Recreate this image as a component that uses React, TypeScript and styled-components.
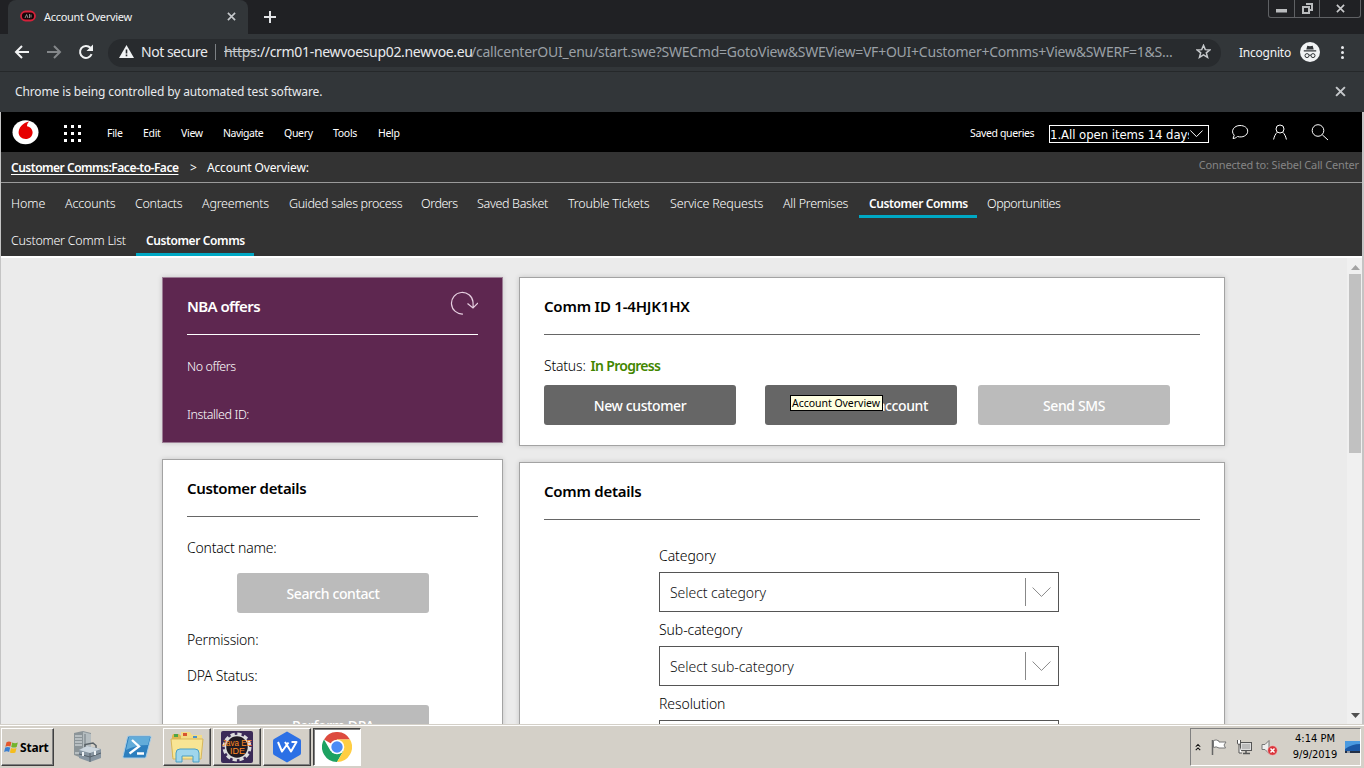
import React from "react";
import styled, { createGlobalStyle, css } from "styled-components";

const GlobalStyle = createGlobalStyle`
  * { box-sizing: border-box; }
  body { margin: 0; overflow: hidden; font-family: "Noto Sans", "Open Sans", sans-serif; }
  h2, p { margin: 0; }
  button { font-family: inherit; }
`;

const Desktop = styled.div`
  width: 1364px;
  height: 768px;
  display: flex;
  flex-direction: column;
  overflow: hidden;
`;

/* Browser chrome */
const TabStrip = styled.div`
  height: 34px;
  flex: none;
  display: flex;
  align-items: flex-end;
  background: #202124;
  padding-left: 8px;
`;
const Tab = styled.div`
  width: 240px;
  height: 34px;
  display: flex;
  align-items: center;
  background: #323639;
  border-radius: 8px 8px 0 0;
  padding: 0 12px 2px 12px;
`;
const TabTitle = styled.span`
  flex: 1;
  margin-left: 8px;
  font-size: 11px;
  letter-spacing: -0.3px;
  color: #f1f3f4;
`;
const NewTab = styled.div`
  height: 34px;
  display: flex;
  align-items: center;
  margin-left: 16px;
  flex: 1;
`;
const WindowControls = styled.div`
  align-self: flex-start;
  display: flex;
  width: 93px;
  height: 18px;
  margin-right: 3px;
  border: 1px solid #5f6164;
  border-top: 0;
  border-radius: 0 0 3px 3px;
`;
const WindowButton = styled.div<{ $width: number }>`
  width: ${(p) => p.$width}px;
  display: flex;
  align-items: center;
  justify-content: center;
  padding-bottom: 1px;
  & + & { border-left: 1px solid #5f6164; }
`;
const Toolbar = styled.div`
  height: 38px;
  flex: none;
  display: flex;
  align-items: center;
  background: #323639;
  border-bottom: 1px solid #25282a;
  padding-left: 14px;
`;
const NavIcons = styled.div`
  display: flex;
  gap: 16px;
  width: 94px;
  padding-bottom: 1px;
`;
const Omnibox = styled.div`
  width: 1113px;
  height: 28px;
  border-radius: 14px;
  background: #282b2e;
  display: flex;
  align-items: center;
  padding: 0 10px 2px 11px;
  font-size: 14px;
  white-space: nowrap;
  color: #e8eaed;
`;
const Security = styled.span`
  width: 68px;
  margin-left: 7px;
  letter-spacing: -0.48px;
`;
const Separator = styled.i`
  width: 1px;
  height: 16px;
  margin: 0 8px 0 6px;
  background: #7c8084;
`;
const UrlHost = styled.span`
  width: 247px;
  letter-spacing: -0.32px;
`;
const Struck = styled.s`color: #c3c7cb;`;
const UrlPath = styled.span`
  flex: 1;
  letter-spacing: -0.24px;
  color: #9aa0a6;
`;
const Incognito = styled.div`
  display: flex;
  align-items: center;
  gap: 9px;
  margin-left: 18px;
  padding-bottom: 1px;
  font-size: 12px;
  letter-spacing: -0.22px;
  color: #f1f3f4;
`;
const Dots = styled.div`
  width: 3px;
  height: 13px;
  margin-left: 21px;
  display: flex;
  flex-direction: column;
  justify-content: space-between;
  i { width: 3px; height: 3px; border-radius: 50%; background: #e8eaed; }
`;
const InfoBar = styled.div`
  height: 40px;
  flex: none;
  display: flex;
  align-items: center;
  justify-content: space-between;
  padding: 0 18px 1px 15px;
  background: #323639;
  color: #e8eaed;
  font-size: 12px;
  letter-spacing: -0.12px;
`;

/* Application header */
const Page = styled.div`
  flex: 1;
  min-height: 0;
  display: flex;
  flex-direction: column;
  overflow: hidden;
  background: #ebebeb;
  border-left: 1px solid #c4c4c4;
  border-right: 2px solid #c4c4c4;
`;
const AppBar = styled.header`
  height: 40px;
  flex: none;
  display: flex;
  align-items: center;
  background: #000;
  color: #fff;
  padding: 0 33px 0 11px;
  font-size: 10.5px;
`;
const AppGrid = styled.div`
  display: grid;
  grid-template-columns: repeat(3, 3px);
  gap: 4px;
  margin: 2px 26px 0 25px;
  i { width: 3px; height: 3px; background: #fff; }
`;
const Menu = styled.nav`
  display: flex;
  flex: 1;
  padding-top: 1px;
`;
const MenuItem = styled.span<{ $width: number; $track?: number }>`
  width: ${(p) => p.$width}px;
  letter-spacing: ${(p) => p.$track ?? -0.3}px;
`;
const QueryLabel = styled.span`
  width: 79px;
  padding-top: 1px;
  letter-spacing: -0.36px;
`;
const QuerySelect = styled.div`
  width: 160px;
  height: 18px;
  margin: 3px 22px 0 0;
  border: 1px solid #fff;
  display: flex;
  align-items: center;
  font: 13px "DejaVu Sans Condensed", sans-serif;
  svg { margin-left: 1px; }
`;
const QueryText = styled.span`
  width: 139px;
  padding-top: 1px;
  white-space: nowrap;
  letter-spacing: -0.05px;
  overflow: hidden;
`;
const AppIcons = styled.div`
  display: flex;
  align-items: center;
  gap: 20px;
`;
const Crumbs = styled.div`
  height: 31px;
  flex: none;
  display: flex;
  align-items: center;
  background: #333;
  border-bottom: 1px solid #9a9a9a;
  padding: 0 3px 0 10px;
  color: #fff;
  font-size: 12px;
`;
const CrumbLink = styled.a`
  width: 179px;
  font-weight: 600;
  letter-spacing: -0.49px;
  text-decoration: underline;
  text-underline-offset: 2px;
`;
const CrumbCurrent = styled.span`
  flex: 1;
  margin-left: 10px;
  letter-spacing: -0.14px;
`;
const Connected = styled.span`
  align-self: flex-start;
  padding-top: 5px;
  font-size: 11px;
  letter-spacing: -0.15px;
  color: #858585;
`;
const Tabs = styled.nav<{ $height: number }>`
  height: ${(p) => p.$height}px;
  flex: none;
  display: flex;
  align-items: flex-end;
  background: #333;
`;
const TabLink = styled.a<{ $width: number; $track: number; $active?: boolean; $drop?: number }>`
  width: ${(p) => p.$width + 20}px;
  height: 28px;
  padding: ${(p) => 3 + (p.$drop ?? 2)}px 0 0 10px;
  line-height: 17px;
  font-size: 12.5px;
  font-weight: 300;
  white-space: nowrap;
  color: #fff;
  letter-spacing: ${(p) => p.$track}px;
  ${(p) => p.$active && css`
    width: ${p.$width + 19}px;
    font-size: 12px;
    font-weight: 600;
    border-bottom: 3px solid #00a8c4;
  `}
`;

/* Content */
const Body = styled.main`
  flex: 1;
  min-height: 0;
  display: flex;
  border-top: 2px solid #fff;
  overflow: hidden;
`;
const Columns = styled.div`
  flex: 1;
  display: grid;
  grid-template-columns: 341px 706px;
  gap: 16px;
  align-items: start;
  padding: 19px 0 0 161px;
`;
const Column = styled.div`
  display: flex;
  flex-direction: column;
  gap: 16px;
`;
const Card = styled.section<{ $height: number; $purple?: boolean }>`
  height: ${(p) => p.$height}px;
  padding: 0 24px;
  background: ${(p) => (p.$purple ? "#5e2750" : "#fff")};
  color: ${(p) => (p.$purple ? "#fff" : "#000")};
  border: 1px solid ${(p) => (p.$purple ? "#9c7d95" : "#a3a3a3")};
  box-shadow: 0 0 5px rgba(0, 0, 0, 0.16);
`;
const CardHead = styled.div<{ $light?: boolean }>`
  height: 57px;
  display: flex;
  justify-content: space-between;
  border-bottom: 1px solid ${(p) => (p.$light ? "#fff" : "#666")};
`;
const CardTitle = styled.h2<{ $track: number }>`
  padding-top: 17px;
  line-height: 22px;
  font-size: 15px;
  font-weight: 600;
  letter-spacing: ${(p) => p.$track}px;
`;
const OfferLine = styled.p<{ $top: number }>`
  margin-top: ${(p) => p.$top}px;
  font-size: 12.5px;
  font-weight: 300;
  line-height: 18px;
  letter-spacing: -0.42px;
`;
const Field = styled.p<{ $top: number }>`
  margin-top: ${(p) => p.$top}px;
  height: 20px;
  line-height: 20px;
  font-size: 14px;
  font-weight: 300;
  letter-spacing: -0.2px;
`;
const Status = styled.b`
  margin-left: 5px;
  font-weight: 600;
  letter-spacing: -0.7px;
  color: #428600;
`;
const ButtonRow = styled.div`
  display: flex;
  margin-top: 9px;
`;
const Button = styled.button<{ $disabled?: boolean; $left?: number; $alignEnd?: boolean }>`
  position: relative;
  flex: none;
  width: 192px;
  height: 40px;
  margin-left: ${(p) => p.$left ?? 0}px;
  padding: 1px 0 0;
  border: 0;
  border-radius: 3px;
  background: ${(p) => (p.$disabled ? "#bbb" : "#666")};
  color: #fff;
  font-size: 14px;
  font-weight: 500;
  letter-spacing: -0.38px;
  ${(p) => p.$alignEnd && css`
    text-align: right;
    padding-right: 29px;
  `}
`;
const CustomerButton = styled(Button)<{ $top: number }>`
  display: block;
  margin: ${(p) => p.$top}px 0 0 50px;
`;
const Tooltip = styled.span`
  position: absolute;
  left: 25px;
  top: 10px;
  width: 93px;
  height: 16px;
  border: 1px solid #000;
  background: #ffffe1;
  color: #000;
  font-size: 10.5px;
  font-weight: 400;
  line-height: 14px;
  text-align: left;
  padding-left: 1px;
  letter-spacing: -0.03px;
`;
const Form = styled.div`
  width: 400px;
  margin: 26px 0 0 115px;
`;
const FormLabel = styled.label`
  display: block;
  height: 26px;
  line-height: 20px;
  font-size: 14px;
  font-weight: 300;
  letter-spacing: -0.08px;
`;
const SelectBox = styled.div`
  height: 40px;
  margin-bottom: 8px;
  border: 1px solid #555;
  display: flex;
  align-items: center;
  padding: 0 7px 0 10px;
  font-size: 14px;
  font-weight: 300;
  letter-spacing: -0.05px;
  color: #111;
  span { flex: 1; padding-top: 1px; }
  i { width: 1px; height: 28px; background: #888; margin-right: 6px; }
`;
const Scrollbar = styled.div`
  width: 15px;
  background: #f0f0f0;
  display: flex;
  flex-direction: column;
  align-items: center;
  padding: 7px 1px 6px 2px;
`;
const Thumb = styled.div`
  width: 12px;
  height: 179px;
  margin: 4px 0 auto;
  background: #c1c1c1;
`;

/* Taskbar */
const Taskbar = styled.footer`
  height: 44px;
  flex: none;
  display: flex;
  align-items: center;
  background: #d4d0c8;
  border-top: 1px solid #d4d0c8;
  box-shadow: inset 0 1px #fff;
  padding: 1px 1px 0;
`;
const bevel = css`
  border: 1px solid;
  border-color: #fff #404040 #404040 #fff;
  box-shadow: inset -1px -1px #808080;
`;
const StartButton = styled.div`
  ${bevel}
  width: 53px;
  height: 38px;
  display: flex;
  align-items: center;
  gap: 1px;
  padding-left: 2px;
  font-size: 12px;
  font-weight: 700;
  letter-spacing: -0.2px;
  color: #000;
`;
const Pinned = styled.div<{ $left: number }>`
  margin-left: ${(p) => p.$left}px;
  display: flex;
`;
const TaskButton = styled.div<{ $pressed?: boolean }>`
  ${bevel}
  width: 48px;
  height: 38px;
  margin-right: 2px;
  display: flex;
  align-items: center;
  justify-content: center;
  ${(p) => p.$pressed && css`
    background: #fff;
    border-color: #404040 #fff #fff #404040;
    box-shadow: inset 1px 1px #808080;
  `}
`;
const Tray = styled.div`
  width: 171px;
  height: 38px;
  margin: 0 2px 0 auto;
  display: flex;
  align-items: center;
  border: 1px solid;
  border-color: #808080 #fff #fff #808080;
  padding-left: 4px;
`;
const Clock = styled.div`
  width: 60px;
  text-align: center;
  font: 11px/16px "DejaVu Sans Condensed", sans-serif;
  color: #000;
`;

const Cross = ({ size, color }: { size: number; color: string }) => (
  <svg width={size} height={size} viewBox="0 0 10 10" stroke={color} strokeWidth="1.8" fill="none">
    <path d="M1 1L9 9M9 1L1 9" />
  </svg>
);
const Chevron = ({ width, color }: { width: number; color: string }) => (
  <svg width={width} height={width / 2 + 1} viewBox="0 0 18 10" stroke={color} strokeWidth={18 / width} fill="none">
    <path d="M.5 .5L9 9L17.5 .5" />
  </svg>
);
const Arrow = ({ color, flip }: { color: string; flip?: boolean }) => (
  <svg width="16" height="16" viewBox="0 0 16 16" fill="none" stroke={color} strokeWidth="2">
    {flip ? <path d="M1 8H14M8 2L14 8L8 14" /> : <path d="M15 8H2M8 2L2 8L8 14" />}
  </svg>
);

const mainTabs: [string, number, number][] = [
  ["Home", 34, -0.05], ["Accounts", 50, -0.18], ["Contacts", 47, -0.28], ["Agreements", 67, -0.22],
  ["Guided sales process", 112, -0.34], ["Orders", 36, -0.45], ["Saved Basket", 71, -0.32],
  ["Trouble Tickets", 82, -0.22], ["Service Requests", 93, -0.16], ["All Premises", 66, -0.26],
];

export default function App() {
  return (
    <Desktop>
      <GlobalStyle />
      <TabStrip>
        <Tab>
          <svg width="16" height="12" viewBox="0 0 16 12">
            <rect x="1" y="1.5" width="14" height="9" rx="4.5" fill="#160608" stroke="#d4213a" strokeWidth="1.8" />
            <path d="M5 8L6.6 4.5L8 8M9.5 4v4M11 4.5v3" stroke="#9b9b9b" strokeWidth=".9" fill="none" />
          </svg>
          <TabTitle>Account Overview</TabTitle>
          <Cross size={9} color="#c5c8cb" />
        </Tab>
        <NewTab>
          <svg width="12" height="12" viewBox="0 0 12 12" stroke="#e3e5e8" strokeWidth="2"><path d="M6 0V12M0 6H12" /></svg>
        </NewTab>
        <WindowControls>
          <WindowButton $width={25}>
            <svg width="11" height="10" viewBox="0 0 11 10"><rect y="6" width="11" height="3.500" fill="#babcbe" /></svg>
          </WindowButton>
          <WindowButton $width={25}>
            <svg width="11" height="11" viewBox="0 0 11 11" fill="none" stroke="#babcbe" strokeWidth="2"><path d="M4 1H10V7H8" /><path d="M1 4H7V10H1Z" /></svg>
          </WindowButton>
          <WindowButton $width={41}><Cross size={9} color="#c9cacc" /></WindowButton>
        </WindowControls>
      </TabStrip>
      <Toolbar>
        <NavIcons>
          <Arrow color="#f1f3f4" />
          <Arrow color="#84878a" flip />
          <svg width="16" height="16" viewBox="0 0 16 16" fill="none" stroke="#f1f3f4" strokeWidth="2">
            <path d="M13.6 10.2A6 6 0 1 1 12.4 3.8" /><path d="M15 .5V7H8.5Z" fill="#f1f3f4" stroke="none" />
          </svg>
        </NavIcons>
        <Omnibox>
          <svg width="15" height="13" viewBox="0 0 15 13"><path d="M7.5 0L15 13H0Z" fill="#f1f3f4" /><path d="M7.5 4.5V8.5M7.5 9.6V11.2" stroke="#282b2e" strokeWidth="1.6" /></svg>
          <Security>Not secure</Security>
          <Separator />
          <UrlHost><Struck>https</Struck>://crm01-newvoesup02.newvoe.eu</UrlHost>
          <UrlPath>/callcenterOUI_enu/start.swe?SWECmd=GotoView&amp;SWEView=VF+OUI+Customer+Comms+View&amp;SWERF=1&amp;S...</UrlPath>
          <svg width="15" height="15" viewBox="0 0 16 16" fill="none" stroke="#c6c9cc" strokeWidth="1.6">
            <path d="M8 1.5L9.9 6L14.8 6.3L11 9.4L12.3 14.2L8 11.6L3.7 14.2L5 9.4L1.2 6.3L6.1 6Z" />
          </svg>
        </Omnibox>
        <Incognito>
          Incognito
          <svg width="20" height="20" viewBox="0 0 20 20">
            <circle cx="10" cy="10" r="10" fill="#f1f3f4" />
            <path d="M6.3 7.5L7.3 3.7L10 4.3L12.7 3.7L13.7 7.5ZM3.8 8.3H16.2V9.5H3.8Z" fill="#323639" />
            <g fill="none" stroke="#323639"><circle cx="7" cy="13.6" r="2" /><circle cx="13" cy="13.6" r="2" /><path d="M9 13.2H11" /></g>
          </svg>
        </Incognito>
        <Dots><i /><i /><i /></Dots>
      </Toolbar>
      <InfoBar>
        Chrome is being controlled by automated test software.
        <Cross size={11} color="#c5c8cb" />
      </InfoBar>
      <Page>
        <AppBar>
          <svg width="27" height="25" viewBox="0 0 27 25">
            <ellipse cx="13.5" cy="12.3" rx="13" ry="12" fill="#fff" />
            <path d="M17.5 1.4C14.5 1.5 7 5 6.6 12C6.4 16 9.700 19 13.6 19C17.5 19 20.6 16 20.6 12.4C20.6 9 18 6.9 15 6.2C15 3.8 16 2.2 17.5 1.4Z" fill="#e60000" />
          </svg>
          <AppGrid>{Array.from({ length: 9 }, (_, i) => <i key={i} />)}</AppGrid>
          <Menu>
            <MenuItem $width={36}>File</MenuItem>
            <MenuItem $width={38}>Edit</MenuItem>
            <MenuItem $width={42}>View</MenuItem>
            <MenuItem $width={61} $track={-0.48}>Navigate</MenuItem>
            <MenuItem $width={49}>Query</MenuItem>
            <MenuItem $width={45}>Tools</MenuItem>
            <MenuItem $width={25}>Help</MenuItem>
          </Menu>
          <QueryLabel>Saved queries</QueryLabel>
          <QuerySelect><QueryText>1.All open items 14 days</QueryText><Chevron width={13} color="#fff" /></QuerySelect>
          <AppIcons>
            <svg width="18" height="17" viewBox="0 0 18 17" fill="none" stroke="#fff"><path d="M2 14.5L3.2 11.2C-.8 7 3 1.5 9 1.5C13.5 1.5 16.7 3.8 16.7 7.2C16.7 11.5 11.5 14 6.5 12.5C5 13.8 3.5 14.5 2 14.5Z" /></svg>
            <svg width="22" height="17" viewBox="0 0 22 17" fill="none" stroke="#fff"><circle cx="11" cy="5" r="4" /><path d="M8.3 8.2C6.5 10 5.3 12 4.6 15.5M13.7 8.2C15.5 10 16.7 12 17.4 15.5" /></svg>
            <svg width="18" height="17" viewBox="0 0 18 17" fill="none" stroke="#fff"><circle cx="7" cy="6.5" r="5.8" /><path d="M11.2 10.7L17 16" /></svg>
          </AppIcons>
        </AppBar>
        <Crumbs>
          <CrumbLink>Customer Comms:Face-to-Face</CrumbLink>
          <span>&gt;</span>
          <CrumbCurrent>Account Overview:</CrumbCurrent>
          <Connected>Connected to: Siebel Call Center</Connected>
        </Crumbs>
        <Tabs $height={35}>
          {mainTabs.map(([label, width, track]) => <TabLink key={label} $width={width} $track={track}>{label}</TabLink>)}
          <TabLink $width={99} $track={-0.4} $active>Customer Comms</TabLink>
          <TabLink $width={74} $track={-0.42}>Opportunities</TabLink>
        </Tabs>
        <Tabs $height={38}>
          <TabLink $width={115} $track={-0.24} $drop={1}>Customer Comm List</TabLink>
          <TabLink $width={99} $track={-0.4} $drop={1} $active>Customer Comms</TabLink>
        </Tabs>
        <Body>
          <Columns>
            <Column>
              <Card $height={166} $purple>
                <CardHead $light>
                  <CardTitle $track={-0.58}>NBA offers</CardTitle>
                  <svg width="28" height="50" viewBox="0 0 28 50" fill="none" stroke="#e6cfe0" strokeWidth="1.2">
                    <path d="M13 36A10.8 10.8 0 1 1 23 24L23.200 29.5M17.500 25.5L23 30L28 25" />
                  </svg>
                </CardHead>
                <OfferLine $top={23}>No offers</OfferLine>
                <OfferLine $top={30}>Installed ID:</OfferLine>
              </Card>
              <Card $height={420}>
                <CardHead><CardTitle $track={-0.32}>Customer details</CardTitle></CardHead>
                <Field $top={21}>Contact name:</Field>
                <CustomerButton $top={15} $disabled>Search contact</CustomerButton>
                <Field $top={17}>Permission:</Field>
                <Field $top={16}>DPA Status:</Field>
                <CustomerButton $top={19} $disabled>Perform DPA</CustomerButton>
              </Card>
            </Column>
            <Column>
              <Card $height={169}>
                <CardHead><CardTitle $track={-0.2}>Comm ID 1-4HJK1HX</CardTitle></CardHead>
                <Field $top={21}>Status:<Status>In Progress</Status></Field>
                <ButtonRow>
                  <Button>New customer</Button>
                  <Button $left={29} $alignEnd>account<Tooltip>Account Overview</Tooltip></Button>
                  <Button $left={21} $disabled>Send SMS</Button>
                </ButtonRow>
              </Card>
              <Card $height={420}>
                <CardHead><CardTitle $track={-0.25}>Comm details</CardTitle></CardHead>
                <Form>
                  <FormLabel>Category</FormLabel>
                  <SelectBox><span>Select category</span><i /><Chevron width={19} color="#888" /></SelectBox>
                  <FormLabel>Sub-category</FormLabel>
                  <SelectBox><span>Select sub-category</span><i /><Chevron width={19} color="#888" /></SelectBox>
                  <FormLabel>Resolution</FormLabel>
                  <SelectBox />
                </Form>
              </Card>
            </Column>
          </Columns>
          <Scrollbar>
            <svg width="9" height="5" viewBox="0 0 9 5"><path d="M4.5 0L9 5H0Z" fill="#a3a3a3" /></svg>
            <Thumb />
            <svg width="9" height="5" viewBox="0 0 9 5"><path d="M0 0H9L4.5 5Z" fill="#505050" /></svg>
          </Scrollbar>
        </Body>
      </Page>
      <Taskbar>
        <StartButton>
          <svg width="15" height="15" viewBox="0 0 15 15">
            <path d="M2.5 2.2Q5 .8 7.4 2.2L6.4 6.6Q4 5.4 1.4 6.7Z" fill="#e4572b" />
            <path d="M8.2 2.5Q10.8 3.8 13.8 2.6L12.7 7Q10 8.2 7.2 7Z" fill="#73b42c" />
            <path d="M1.2 7.5Q3.8 6.3 6.2 7.5L5.1 11.9Q2.8 10.8 .1 12Z" fill="#3a7fd0" />
            <path d="M7 7.9Q9.8 9.2 12.5 8L11.4 12.4Q8.6 13.6 5.9 12.4Z" fill="#f5bd1d" />
          </svg>
          Start
        </StartButton>
        <Pinned $left={19}>
          <svg width="28" height="32" viewBox="0 0 28 32">
            <path d="M1 2L10 0L18 2V24L9 27L1 24Z" fill="#8b9498" /><path d="M10 1L18 3V24L10 27Z" fill="#b5bdc0" />
            <path d="M2 5H9M2 8H9M2 11H9M2 14H9M2 22H9" stroke="#e3e8ea" /><path d="M12 3V23" stroke="#737d82" />
            <path d="M12 16V13.5L20 12L23 14.5V17" fill="none" stroke="#586167" strokeWidth="1.5" />
            <path d="M6 19L14 15L28 18V27L17 31L6 27Z" fill="#8795a1" /><path d="M6 19L14 15L28 18L17 22Z" fill="#ccd6de" />
            <path d="M17 22V31M6 23L17 26L28 22" stroke="#56616b" fill="none" /><path d="M10 21V25M22 20V24" stroke="#eef2f5" strokeWidth="2" />
          </svg>
        </Pinned>
        <Pinned $left={21}>
          <svg width="30" height="24" viewBox="0 0 30 24">
            <path d="M7 1H28Q29.5 1 29 2.5L24 22Q23.7 23 22.5 23H2Q.5 23 1 21.5L5.5 2Q6 1 7 1Z" fill="#2d7fbe" stroke="#a7cde7" />
            <path d="M7 2H28L26 10Q14 10 4 15Z" fill="#62acd9" />
            <path d="M10 5L17 11.5L7.5 18.5M15 18.5H22" stroke="#fff" strokeWidth="2.3" fill="none" />
          </svg>
        </Pinned>
        <Pinned $left={11}>
          <TaskButton>
            <svg width="34" height="32" viewBox="0 0 34 32">
              <path d="M2 5L3 3H9L11 5H31V26H2Z" fill="#dfb851" /><path d="M11 1H20L22 4H32V12H11Z" fill="#f3db87" />
              <rect x="4" y="3" width="4" height="3" fill="#4ea546" /><rect x="13" y="2" width="4" height="3" fill="#d75431" /><rect x="23" y="5" width="4" height="2" fill="#4b93ca" />
              <path d="M1 8H33L31 28H3Z" fill="#f8e594" stroke="#d7b75a" />
              <path d="M6 31V22Q6 18 10 18H25Q29 18 29 22V31H23V25H12V31Z" fill="#9fd6ec" stroke="#4a9fc4" />
            </svg>
          </TaskButton>
          <TaskButton>
            <svg width="32" height="32" viewBox="0 0 32 32">
              <rect width="32" height="32" rx="2" fill="#3b2a58" />
              <circle cx="16" cy="16" r="13" fill="none" stroke="#ddd" strokeWidth="3" strokeDasharray="4.2 2.6" />
              <circle cx="16" cy="16" r="11.5" fill="#211a22" stroke="#ddd" strokeWidth="1.5" />
              <g fill="#ff8a24" fontFamily="Liberation Sans, sans-serif" fontSize="9"><text x="1" y="15" textLength="30" lengthAdjust="spacingAndGlyphs">Java EE</text><text x="9" y="23">IDE</text></g>
            </svg>
          </TaskButton>
          <TaskButton>
            <svg width="28" height="32" viewBox="0 0 28 32">
              <path d="M14 .5L27 8Q28 8.5 28 10V22Q28 23.5 27 24L14 31.5L1 24Q0 23.5 0 22V10Q0 8.5 1 8Z" fill="#2c70e5" />
              <path d="M5 11L9 20.500L15.500 11.500M12 11L18 20.500L23.500 11H18.500" fill="none" stroke="#fff" strokeWidth="2" strokeLinejoin="round" />
            </svg>
          </TaskButton>
          <TaskButton $pressed>
            <svg width="30" height="30" viewBox="0 0 30 30">
              <path d="M15 15L2 7.5A15 15 0 0 1 28 7.5H15Z" fill="#dd4b3e" />
              <path d="M15 15L8.5 18.75L2 7.5A15 15 0 0 0 15 30L21.5 18.75Z" fill="#1da261" />
              <path d="M15 7.5H28A15 15 0 0 1 15 30L21.5 18.75Z" fill="#ffce43" />
              <circle cx="15" cy="15" r="7.3" fill="#fff" /><circle cx="15" cy="15" r="5.7" fill="#4c8bf5" />
            </svg>
          </TaskButton>
        </Pinned>
        <Tray>
          <svg width="9" height="11" viewBox="0 0 8 11" fill="none" stroke="#111" strokeWidth="1.4"><path d="M1 4.5L4 1.5L7 4.5M1 9L4 6L7 9" /></svg>
          <Pinned $left={10}><svg width="16" height="16" viewBox="0 0 16 16"><path d="M1.5 1V16" stroke="#666" strokeWidth="1.5" /><path d="M2.5 1.5Q5 0 8 2V3H15L13 6L14.5 9H8Q5 7 2.5 8.5Z" fill="#fff" stroke="#777" /></svg></Pinned>
          <Pinned $left={9}><svg width="17" height="16" viewBox="0 0 17 16"><rect x="4.5" y="3.5" width="11" height="8" fill="#ddd" stroke="#555" /><rect x="6" y="5" width="8" height="5" fill="#bbb" /><path d="M7 14.5H14M10 12V14" stroke="#555" strokeWidth="1.5" /><path d="M1.5 1V4Q1.5 5.5 3 5.5T4.5 4V1M3 6V14H6" fill="#fff" stroke="#555" /></svg></Pinned>
          <Pinned $left={8}><svg width="17" height="17" viewBox="0 0 17 17"><path d="M1 5.5H4L8 1.5V14.5L4 10.5H1Z" fill="#eee" stroke="#777" /><circle cx="11.5" cy="11.5" r="4.8" fill="#d9343a" stroke="#f4cccc" strokeWidth=".6" /><path d="M9.5 9.5L13.5 13.5M13.5 9.5L9.5 13.5" stroke="#fff" strokeWidth="1.5" /></svg></Pinned>
          <Pinned $left={7}><Clock>4:14 PM<br />9/9/2019</Clock></Pinned>
          <Pinned $left={0}><svg width="15" height="13" viewBox="0 0 15 13"><rect width="15" height="11" fill="#1b58a5" /><path d="M0 0H15V3Q7 3 0 8Z" fill="#4a9ae0" /><rect y="10" width="15" height="2" fill="#222f45" /><path d="M2 11H5" stroke="#fff" /></svg></Pinned>
        </Tray>
      </Taskbar>
    </Desktop>
  );
}
